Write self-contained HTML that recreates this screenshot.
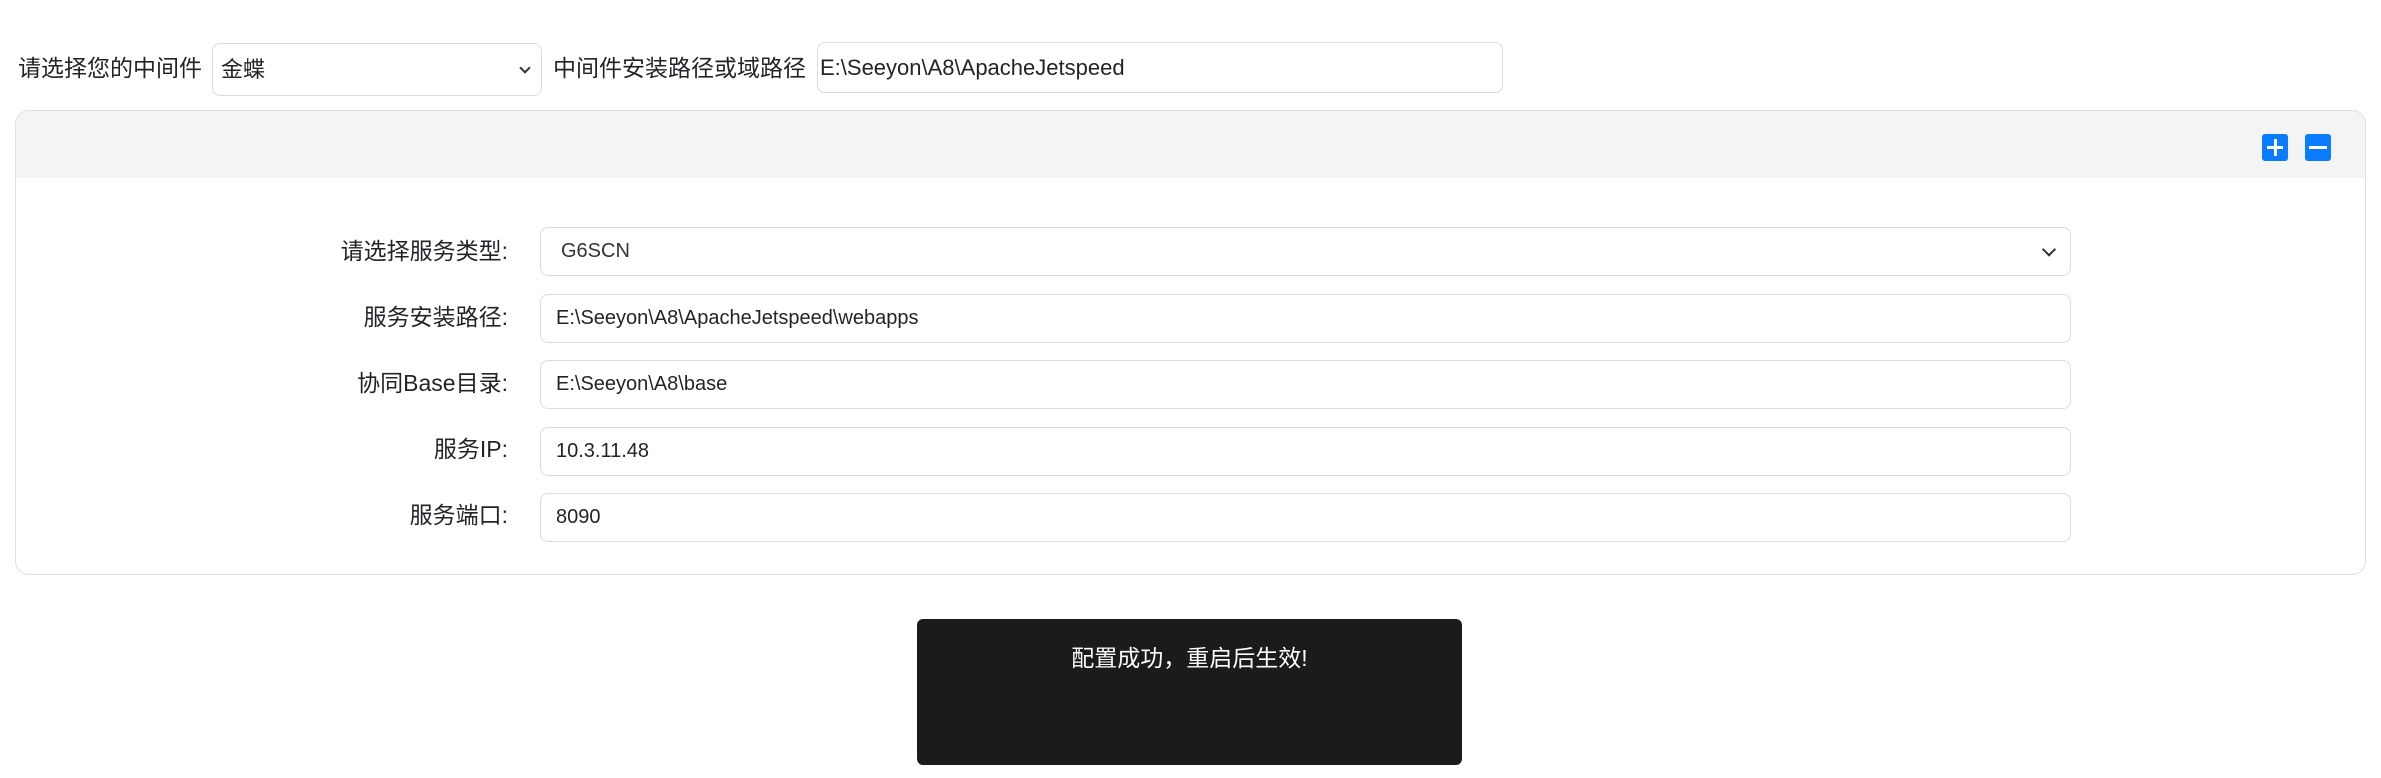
<!DOCTYPE html>
<html><head><meta charset="utf-8"><style>
*{box-sizing:border-box;margin:0;padding:0}
body{width:2381px;height:778px;background:#fff;font-family:"Liberation Sans","Noto Sans CJK SC",sans-serif;color:#212529;position:relative;overflow:hidden}
.abs{position:absolute}
.box{position:absolute;border:1px solid #dcdcdc;border-radius:8px;background:#fff;display:flex;align-items:center}
.lbl{position:absolute;font-size:22px;color:#212529;white-space:nowrap;line-height:30px}
.chev{position:absolute;right:16px;top:50%;width:10px;height:10px;border-right:2px solid #333;border-bottom:2px solid #333;transform:translateY(-75%) rotate(45deg)}
.btn{position:absolute;width:26px;height:27px;background:#0a7cff;border-radius:3px}
</style></head><body>
<div class="lbl" style="left:18px;top:53px;font-size:23px">请选择您的中间件</div>
<div class="box" style="left:212px;top:43px;width:330px;height:53px;font-size:22px;padding-left:8px;padding-bottom:4px">金蝶<div class="chev" style="right:12px;width:8px;height:8px"></div></div>
<div class="lbl" style="left:553px;top:53px;font-size:23px">中间件安装路径或域路径</div>
<div class="box" style="left:817px;top:42px;width:686px;height:51px;font-size:22px;padding-left:2px">E:\Seeyon\A8\ApacheJetspeed</div>

<div class="abs" style="left:15px;top:110px;width:2351px;height:465px;border:1px solid #dedede;border-radius:14px;overflow:hidden">
 <div style="height:67px;background:#f4f4f4"></div>
</div>
<div class="btn" style="left:2262px;top:134px"><div class="abs" style="left:5px;top:12px;width:16px;height:3px;background:#fff"></div><div class="abs" style="left:11.5px;top:5px;width:3px;height:17px;background:#fff"></div></div>
<div class="btn" style="left:2305px;top:134px"><div class="abs" style="left:4px;top:12px;width:18px;height:3px;background:#fff"></div></div>

<div class="lbl" style="right:1873px;top:236px;font-size:23px">请选择服务类型:</div>
<div class="box" style="left:540px;top:227px;width:1531px;height:49px;font-size:20px;padding-left:20px;color:#333">G6SCN<div class="chev"></div></div>
<div class="lbl" style="right:1873px;top:302px;font-size:23px">服务安装路径:</div>
<div class="box" style="left:540px;top:294px;width:1531px;height:49px;font-size:20px;padding-left:15px">E:\Seeyon\A8\ApacheJetspeed\webapps</div>
<div class="lbl" style="right:1873px;top:368px;font-size:23px">协同Base目录:</div>
<div class="box" style="left:540px;top:360px;width:1531px;height:49px;font-size:20px;padding-left:15px">E:\Seeyon\A8\base</div>
<div class="lbl" style="right:1873px;top:434px;font-size:23px">服务IP:</div>
<div class="box" style="left:540px;top:427px;width:1531px;height:49px;font-size:20px;padding-left:15px">10.3.11.48</div>
<div class="lbl" style="right:1873px;top:500px;font-size:23px">服务端口:</div>
<div class="box" style="left:540px;top:493px;width:1531px;height:49px;font-size:20px;padding-left:15px">8090</div>

<div class="abs" style="left:917px;top:619px;width:545px;height:146px;background:#1b1b1b;border-radius:6px;color:#fff;font-size:23px;text-align:center;padding-top:24px;line-height:30px">配置成功，重启后生效!</div>
</body></html>
